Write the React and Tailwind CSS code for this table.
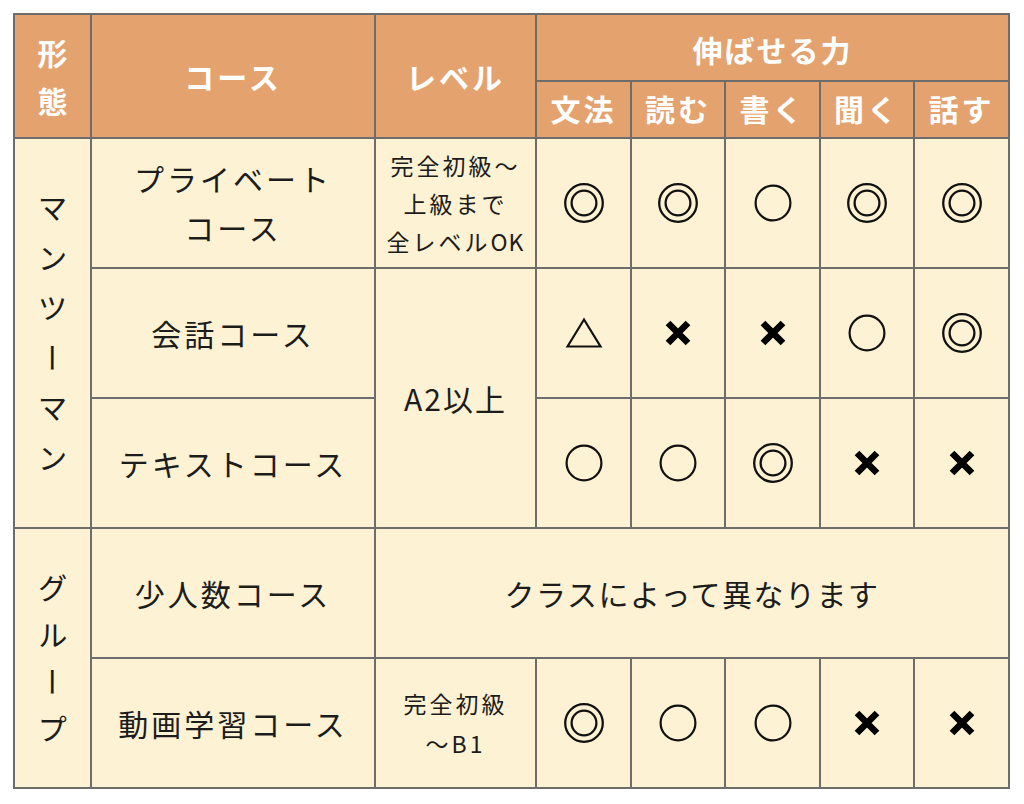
const FONT = { fontFamily: '"Noto Sans CJK JP", "Noto Sans", sans-serif' };

const HEAD = 'flex items-center justify-center bg-[#e4a26f] text-white font-bold text-[30px]';
const BODY = 'flex items-center justify-center bg-[#fdf2d3] text-[#1c1c1c] text-center';

function Mark({ type }) {
  if (type === 'dbl') {
    return (
      <svg width="44" height="44" viewBox="0 0 44 44" fill="none" stroke="#111" strokeWidth="2.3">
        <circle cx="22" cy="22" r="18.8" />
        <circle cx="22" cy="22" r="12.4" />
      </svg>
    );
  }
  if (type === 'circle') {
    return (
      <svg width="40" height="40" viewBox="0 0 40 40" fill="none" stroke="#111" strokeWidth="2.2">
        <circle cx="20" cy="20" r="17.4" />
      </svg>
    );
  }
  if (type === 'tri') {
    return (
      <svg width="38" height="32" viewBox="0 0 38 32" fill="none" stroke="#111" strokeWidth="2.2">
        <path d="M2.5 29.5 L19 2.5 L35.5 29.5 Z" />
      </svg>
    );
  }
  // heavy x
  return (
    <svg width="26" height="26" viewBox="0 0 26 26" fill="none" stroke="#000" strokeWidth="6.6">
      <path d="M3 3 L23 23 M23 3 L3 23" />
    </svg>
  );
}

const ROWS = [
  ['dbl', 'dbl', 'circle', 'dbl', 'dbl'],
  ['tri', 'x', 'x', 'circle', 'dbl'],
  ['circle', 'circle', 'dbl', 'x', 'x'],
  ['dbl', 'circle', 'circle', 'x', 'x'],
];

function Marks({ row }) {
  return row.map((t, i) => (
    <div key={i} className={BODY}>
      <Mark type={t} />
    </div>
  ));
}

export default function App() {
  return (
    <div className="w-[1024px] h-[804px] bg-white pt-[13px] pl-[13px]" style={FONT}>
      <div className="inline-grid grid-cols-[75px_282px_159px_93px_92px_93px_92px_93px] grid-rows-[65px_55px_128px_128px_128px_128px_128px] gap-[2px] p-[2px] bg-[#6f6d6b]">
        <div className={`${HEAD} row-span-2 flex-col leading-[48px]`}>
          <span>形</span>
          <span>態</span>
        </div>
        <div className={`${HEAD} row-span-2 tracking-[3px] leading-none`}>コース</div>
        <div className={`${HEAD} row-span-2 tracking-[3px] leading-none`}>レベル</div>
        <div className={`${HEAD} col-span-5 tracking-[2px] leading-none pt-[2px]`}>伸ばせる力</div>
        {['文法', '読む', '書く', '聞く', '話す'].map((h) => (
          <div key={h} className={`${HEAD} tracking-[3px] leading-none pb-[4px]`}>{h}</div>
        ))}

        <div className={`${BODY} row-span-3 text-[30px]`}>
          <span className="[writing-mode:vertical-rl] tracking-[20px] leading-none pt-[20px]">マンツーマン</span>
        </div>
        <div className={`${BODY} flex-col text-[30px] leading-[49px] tracking-[3px]`}>
          <span>プライベート</span>
          <span>コース</span>
        </div>
        <div className={`${BODY} flex-col text-[23px] leading-[38px] tracking-[3px]`}>
          <span>完全初級～</span>
          <span>上級まで</span>
          <span>全レベル<span className="tracking-[1px]">OK</span></span>
        </div>
        <Marks row={ROWS[0]} />

        <div className={`${BODY} text-[30px] tracking-[3px]`}>会話コース</div>
        <div className={`${BODY} row-span-2 text-[30px] tracking-[2px]`}>A2以上</div>
        <Marks row={ROWS[1]} />

        <div className={`${BODY} text-[30px] tracking-[3px]`}>テキストコース</div>
        <Marks row={ROWS[2]} />

        <div className={`${BODY} row-span-2 text-[30px]`}>
          <span className="[writing-mode:vertical-rl] tracking-[17px] leading-none pt-[17px]">グループ</span>
        </div>
        <div className={`${BODY} text-[30px] tracking-[3px]`}>少人数コース</div>
        <div className={`${BODY} col-span-6 text-[30px] tracking-[1.5px]`}>クラスによって異なります</div>

        <div className={`${BODY} text-[30px] tracking-[3px]`}>動画学習コース</div>
        <div className={`${BODY} flex-col text-[23px] leading-[40px] tracking-[3px]`}>
          <span>完全初級</span>
          <span>～B1</span>
        </div>
        <Marks row={ROWS[3]} />
      </div>
    </div>
  );
}
